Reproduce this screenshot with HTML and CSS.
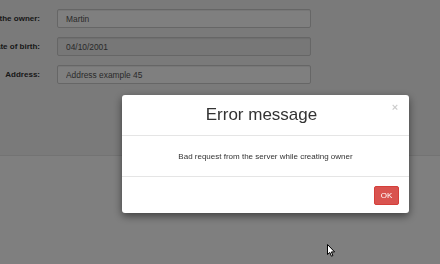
FILE: index.html
```html
<!DOCTYPE html>
<html lang="en">
<head>
    <meta charset="UTF-8">
    <title>New owner</title>
    <link rel="stylesheet" href="styles.css">
</head>
<body>
    <div class="well">
        <form class="owner-form">
            <div class="form-row">
                <label class="form-label"><span>Name of the owner:</span></label>
                <input class="form-input" type="text" value="Martin">
            </div>
            <div class="form-row">
                <label class="form-label"><span>Date of birth:</span></label>
                <input class="form-input" type="text" value="04/10/2001" disabled>
            </div>
            <div class="form-row">
                <label class="form-label"><span>Address:</span></label>
                <input class="form-input" type="text" value="Address example 45">
            </div>
        </form>
    </div>

    <!-- Error dialog -->
    <div class="backdrop">
        <div class="modal">
            <div class="modal-header">
                <h4 class="modal-title">Error message</h4>
                <button class="close" type="button">&times;</button>
            </div>
            <div class="modal-body">Bad request from the server while creating owner</div>
            <div class="modal-footer">
                <button class="btn-danger" type="button">OK</button>
            </div>
        </div>
        <svg class="cursor" width="9" height="14" viewBox="0 0 9 14">
            <path d="M0.5 0.5 L0.5 10.5 L2.8 8.4 L4.4 12.2 L5.9 11.6 L4.4 7.9 L7.6 7.9 Z" fill="#fff" stroke="#000" stroke-width="1" stroke-linejoin="round"/>
        </svg>
    </div>
</body>
</html>
```

FILE: styles.css
```css
body {
    margin: 0;
    font-family: "Liberation Sans", Arial, sans-serif;
    background: #fff;
    color: #333;
    height: 264px;
    overflow: hidden;
}
.well {
    background-color: #f5f5f5;
    border-bottom: 1px solid #e6e6e6;
    height: 156px;
    padding-top: 9px;
    box-sizing: border-box;
}
.owner-form {
    display: flex;
    flex-direction: column;
    gap: 9px;
}
.form-row {
    display: flex;
    align-items: center;
    gap: 17px;
}
.form-label {
    width: 40px;
    display: flex;
    justify-content: flex-end;
    font-size: 8px;
    font-weight: bold;
    color: #333;
    white-space: nowrap;
}
.form-input {
    width: 254px;
    height: 19px;
    box-sizing: border-box;
    margin: 0;
    padding: 0 8px;
    border: 1px solid #ccc;
    border-radius: 2px;
    background: #fff;
    font-family: inherit;
    font-size: 8.4px;
    color: #555;
    box-shadow: inset 0 1px 1px rgba(0, 0, 0, 0.075);
}
.form-input:disabled {
    background-color: #eee;
    color: #555;
}
.backdrop {
    position: fixed;
    inset: 0;
    background-color: rgba(0, 0, 0, 0.5);
}
.modal {
    position: absolute;
    left: 122px;
    top: 95px;
    width: 287px;
    background: #fff;
    border-radius: 3px;
    box-shadow: 0 3px 9px rgba(0, 0, 0, 0.5);
}
.modal-header {
    display: flex;
    align-items: center;
    height: 40px;
    padding: 0 10px;
    border-bottom: 1px solid #e5e5e5;
}
.modal-title {
    flex: 1;
    margin: 0;
    text-align: center;
    font-size: 17px;
    font-weight: normal;
    color: #333;
}
.close {
    width: 8px;
    margin: 0;
    padding: 0;
    border: none;
    background: none;
    align-self: flex-start;
    margin-top: 7px;
    font-family: inherit;
    font-size: 11px;
    font-weight: bold;
    line-height: 1;
    color: #000;
    opacity: 0.2;
}
.modal-body {
    height: 40px;
    display: flex;
    align-items: center;
    justify-content: center;
    font-size: 8px;
    color: #333;
    border-bottom: 1px solid #e5e5e5;
}
.modal-footer {
    display: flex;
    justify-content: flex-end;
    padding: 9px 10px 8px;
}
.btn-danger {
    width: 25px;
    height: 19px;
    margin: 0;
    padding: 0;
    background-color: #d9534f;
    border: 1px solid #d43f3a;
    border-radius: 2px;
    color: #fff;
    font-family: inherit;
    font-size: 8px;
}
.cursor {
    position: absolute;
    left: 327px;
    top: 244px;
}
```
